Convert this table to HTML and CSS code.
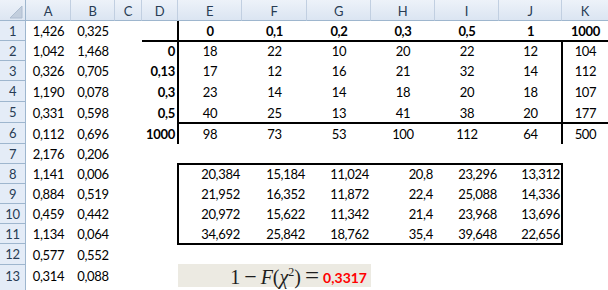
FILE: index.html
```html
<!DOCTYPE html>
<html lang="ru">
<head>
<meta charset="utf-8">
<title>Лист</title>
<link rel="stylesheet" href="styles.css">
</head>
<body>
<div class="sheet">
  <div class="row hdr">
    <div class="corner"><svg class="tri" width="25" height="20" viewBox="0 0 25 20"><polygon points="22,6 22,18 10,18" fill="#c2cedd" stroke="#aebdd0" stroke-width="1"/></svg></div>
    <div class="ch">A</div><div class="ch">B</div><div class="ch">C</div><div class="ch">D</div><div class="ch">E</div><div class="ch">F</div><div class="ch">G</div><div class="ch">H</div><div class="ch">I</div><div class="ch">J</div><div class="ch">K</div>
  </div>

  <div class="row">
    <div class="rh">1</div>
    <div class="c">1,426</div><div class="c">0,325</div><div class="c"></div>
    <div class="c e-rb"></div>
    <div class="c b e-b">0</div><div class="c b e-b">0,1</div><div class="c b e-b">0,2</div><div class="c b e-b">0,3</div><div class="c b e-b">0,5</div><div class="c b e-b">1</div><div class="c b e-b">1000</div>
  </div>

  <div class="row">
    <div class="rh">2</div>
    <div class="c">1,042</div><div class="c">1,468</div><div class="c"></div>
    <div class="c r b e-r">0</div>
    <div class="c">18</div><div class="c">22</div><div class="c">10</div><div class="c">20</div><div class="c">22</div><div class="c e-r">12</div><div class="c">104</div>
  </div>

  <div class="row">
    <div class="rh">3</div>
    <div class="c">0,326</div><div class="c">0,705</div><div class="c"></div>
    <div class="c r b e-r">0,13</div>
    <div class="c">17</div><div class="c">12</div><div class="c">16</div><div class="c">21</div><div class="c">32</div><div class="c e-r">14</div><div class="c">112</div>
  </div>

  <div class="row h21">
    <div class="rh">4</div>
    <div class="c">1,190</div><div class="c">0,078</div><div class="c"></div>
    <div class="c r b e-r">0,3</div>
    <div class="c">23</div><div class="c">14</div><div class="c">14</div><div class="c">18</div><div class="c">20</div><div class="c e-r">18</div><div class="c">107</div>
  </div>

  <div class="row h21">
    <div class="rh">5</div>
    <div class="c">0,331</div><div class="c">0,598</div><div class="c"></div>
    <div class="c r b e-r">0,5</div>
    <div class="c e-b">40</div><div class="c e-b">25</div><div class="c e-b">13</div><div class="c e-b">41</div><div class="c e-b">38</div><div class="c e-rb">20</div><div class="c e-b">177</div>
  </div>

  <div class="row h21">
    <div class="rh">6</div>
    <div class="c">0,112</div><div class="c">0,696</div><div class="c"></div>
    <div class="c r b e-r">1000</div>
    <div class="c">98</div><div class="c">73</div><div class="c">53</div><div class="c">100</div><div class="c">112</div><div class="c e-r">64</div><div class="c">500</div>
  </div>

  <div class="row">
    <div class="rh">7</div>
    <div class="c">2,176</div><div class="c">0,206</div>
  </div>

  <div class="row">
    <div class="rh">8</div>
    <div class="c">1,141</div><div class="c">0,006</div><div class="c"></div><div class="c"></div>
    <div class="c rr e-tl">20,384</div><div class="c rr e-t">15,184</div><div class="c rr e-t">11,024</div><div class="c rr e-t">20,8</div><div class="c rr e-t">23,296</div><div class="c rr e-tr">13,312</div>
  </div>

  <div class="row">
    <div class="rh">9</div>
    <div class="c">0,884</div><div class="c">0,519</div><div class="c"></div><div class="c"></div>
    <div class="c rr e-l">21,952</div><div class="c rr">16,352</div><div class="c rr">11,872</div><div class="c rr">22,4</div><div class="c rr">25,088</div><div class="c rr e-r">14,336</div>
  </div>

  <div class="row">
    <div class="rh">10</div>
    <div class="c">0,459</div><div class="c">0,442</div><div class="c"></div><div class="c"></div>
    <div class="c rr e-l">20,972</div><div class="c rr">15,622</div><div class="c rr">11,342</div><div class="c rr">21,4</div><div class="c rr">23,968</div><div class="c rr e-r">13,696</div>
  </div>

  <div class="row">
    <div class="rh">11</div>
    <div class="c">1,134</div><div class="c">0,064</div><div class="c"></div><div class="c"></div>
    <div class="c rr e-bl">34,692</div><div class="c rr e-b">25,842</div><div class="c rr e-b">18,762</div><div class="c rr e-b">35,4</div><div class="c rr e-b">39,648</div><div class="c rr e-br">22,656</div>
  </div>

  <div class="row h21">
    <div class="rh">12</div>
    <div class="c">0,577</div><div class="c">0,552</div>
  </div>

  <div class="row h21">
    <div class="rh">13</div>
    <div class="c">0,314</div><div class="c">0,088</div><div class="c"></div><div class="c"></div>
    <div class="formula">
      <span class="tex"><span class="one">1</span><span class="minus">−</span><i class="fF">F</i><span class="par">(</span><i class="chi">χ</i><sup class="sq">2</sup><span class="par">)</span><span class="eq">=</span></span>
      <span class="res">0,3317</span>
    </div>
  </div>

  <div class="row last">
    <div class="rh"></div>
  </div>
</div>
</body>
</html>
```

FILE: styles.css
```css
* { box-sizing: border-box; }

html, body {
  margin: 0;
  padding: 0;
  background: #ffffff;
}

body {
  width: 608px;
  height: 290px;
  overflow: hidden;
  font-family: Lato, "Liberation Sans", sans-serif;
  font-size: 13px;
  letter-spacing: -0.3px;
  color: #000000;
}

.sheet {
  display: flex;
  flex-direction: column;
}

.row {
  display: grid;
  grid-template-columns: 26px 45px 44px 27px 36px 64px 65px 64px 64px 64px 63px 47px;
  height: 20px;
}

.row.h21,
.row.hdr {
  height: 21px;
}

.row.last {
  height: 4px;
}

/* headers */
.corner {
  background: linear-gradient(#edf2f9, #dde6f2);
  border-right: 1px solid #9eb6ce;
  border-bottom: 1px solid #9eb6ce;
}

.tri { display: block; }

.ch {
  background: linear-gradient(#edf2f9, #dbe5f2);
  border-right: 1px solid #c1cfe1;
  border-bottom: 1px solid #9eb6ce;
  color: #283c54;
  display: flex;
  align-items: center;
  justify-content: center;
  padding-top: 1px;
}

.rh {
  background: #e4ecf7;
  border-right: 1px solid #9eb6ce;
  border-bottom: 1px solid #9eb6ce;
  color: #283c54;
  display: flex;
  align-items: center;
  justify-content: center;
}

.last .rh { border-bottom: 0; }

/* cells */
.c {
  display: flex;
  align-items: center;
  justify-content: center;
  white-space: nowrap;
}

.c.r {
  justify-content: flex-end;
  padding-right: 3px;
}

.c.rr {
  justify-content: flex-end;
  padding-right: 2px;
}

.b { font-weight: 700; }

/* thick (2px) cell edges straddling the grid line */
.e-r  { box-shadow: inset -1px 0 #000, 1px 0 #000; }
.e-b  { box-shadow: inset 0 -1px #000, 0 1px #000; }
.e-rb { box-shadow: inset -1px 0 #000, 1px 0 #000, inset 0 -1px #000, 0 1px #000, 1px 1px #000; }
.e-l  { box-shadow: inset 1px 0 #000, -1px 0 #000; }
.e-t  { box-shadow: inset 0 1px #000, 0 -1px #000; }
.e-tl { box-shadow: inset 1px 0 #000, -1px 0 #000, inset 0 1px #000, 0 -1px #000, -1px -1px #000; }
.e-tr { box-shadow: inset -1px 0 #000, 1px 0 #000, inset 0 1px #000, 0 -1px #000, 1px -1px #000; }
.e-bl { box-shadow: inset 1px 0 #000, -1px 0 #000, inset 0 -1px #000, 0 1px #000, -1px 1px #000; }
.e-br { box-shadow: inset -1px 0 #000, 1px 0 #000, inset 0 -1px #000, 0 1px #000, 1px 1px #000; }

/* formula picture */
.formula {
  grid-column: span 3;
  background: #eceae2;
  margin-top: -1px;
  height: 23px;
  display: flex;
  align-items: center;
  justify-content: flex-end;
  padding-right: 4px;
  letter-spacing: 0;
}

.tex {
  font-family: "Liberation Serif", "DejaVu Serif", serif;
  font-size: 20px;
  line-height: 22px;
  color: #1e1e1e;
  white-space: nowrap;
  display: flex;
  align-items: baseline;
  margin-top: 1px;
}

.tex i { font-style: italic; }

.minus { margin: 0 4px 0 4px; font-size: 22px; }
.sq { font-size: 12px; position: relative; top: -8px; line-height: 0; }
.eq { margin: 0 4px 0 4px; font-size: 25px; line-height: 22px; }

.res {
  font-family: Lato, "Liberation Sans", sans-serif;
  font-weight: 700;
  font-size: 14px;
  color: #ff0000;
  letter-spacing: 0;
  margin-top: 3px;
}
```
